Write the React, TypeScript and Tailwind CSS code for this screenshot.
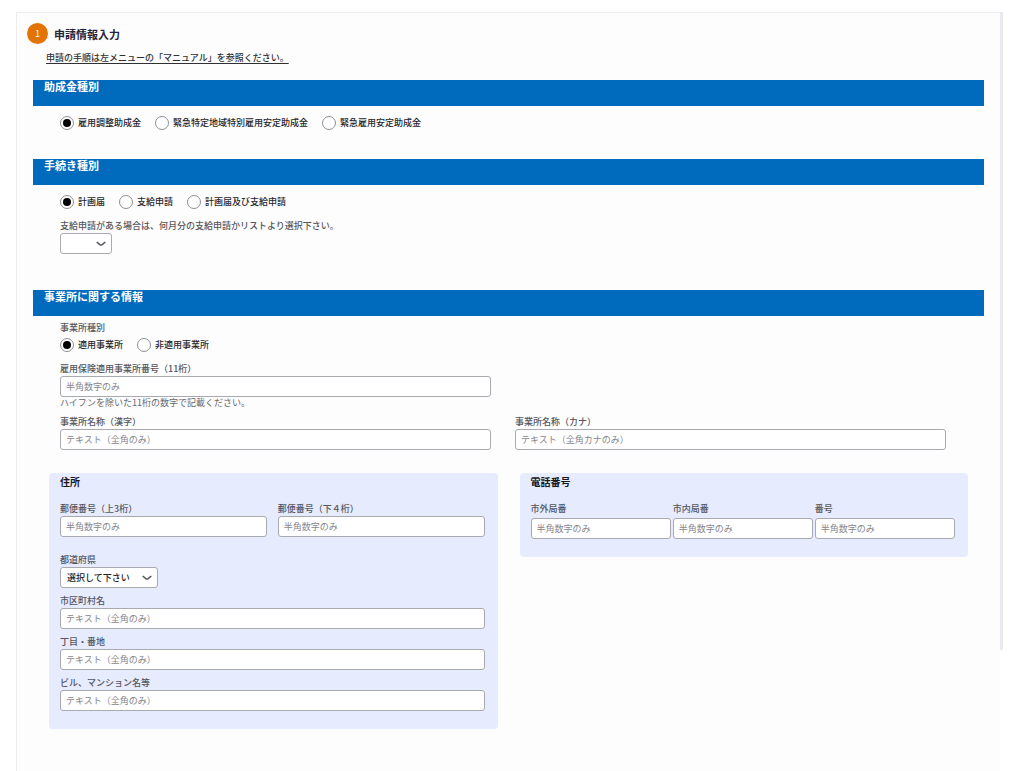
import type { ReactNode } from "react";

interface FieldProps {
  id: string;
  label: string;
  placeholder: string;
  hint?: string;
  labelClass?: string;
}

function Field({ id, label, placeholder, hint, labelClass = "" }: FieldProps) {
  return (
    <div className="min-w-0">
      <label htmlFor={id} className={`block leading-[14px] font-medium text-[#55555c] ${labelClass}`}>
        {label}
      </label>
      <input
        id={id}
        type="text"
        placeholder={placeholder}
        className="block h-[21px] w-full rounded-[3px] border border-[#a9a9b0] bg-white px-[5px] text-[#333] placeholder:text-[#85858c]"
      />
      {hint && <p className="leading-3 text-[#66666c]">{hint}</p>}
    </div>
  );
}

interface RadioGroupProps {
  name: string;
  legend: string;
  options: string[];
}

function RadioGroup({ name, legend, options }: RadioGroupProps) {
  return (
    <div role="radiogroup" aria-label={legend} className="flex flex-wrap gap-x-[14px]">
      {options.map((option, i) => (
        <label key={option} className="flex h-4 items-center gap-1 font-medium text-[#26262c]">
          <input
            type="radio"
            name={name}
            defaultChecked={i === 0}
            className="grid size-[14px] appearance-none place-content-center rounded-full border border-[#8f8f96] bg-white before:size-2 before:rounded-full before:content-[''] checked:before:bg-black"
          />
          {option}
        </label>
      ))}
    </div>
  );
}

interface SelectProps {
  id: string;
  label: string;
  options: string[];
  className: string;
  labelClass: string;
}

function Select({ id, label, options, className, labelClass }: SelectProps) {
  return (
    <div>
      <label htmlFor={id} className={`block font-medium text-[#55555c] ${labelClass}`}>
        {label}
      </label>
      <div className={`relative ${className}`}>
        <select
          id={id}
          className="block h-[21px] w-full appearance-none rounded-[3px] border border-[#a9a9b0] bg-white pl-[6px] font-medium text-[#222]"
        >
          {options.map((option) => (
            <option key={option}>{option}</option>
          ))}
        </select>
        <svg
          viewBox="0 0 10 6"
          className="pointer-events-none absolute top-2 right-[6px] h-[6px] w-[10px] fill-none stroke-[#55555c]"
          strokeWidth="1.5"
        >
          <path d="M0.7 1 L3.8 3.6 Q5 4.4 6.2 3.6 L9.3 1" />
        </svg>
      </div>
    </div>
  );
}

function SectionBar({ children }: { children: ReactNode }) {
  return (
    <h2 className="h-[26px] bg-[#006abc] px-[11px] text-[11px] leading-[13px] font-bold text-white">
      {children}
    </h2>
  );
}

function Panel({ title, children }: { title: string; children: ReactNode }) {
  return (
    <section className="rounded-[4px] bg-[#e6ebfe] pt-[2px] pr-[13px] pb-[18px] pl-[11px]">
      <h3 className="text-[10px] leading-[14px] font-bold text-[#17171c]">{title}</h3>
      {children}
    </section>
  );
}

export default function App() {
  return (
    <div className="flex min-h-screen bg-white pt-3 pr-[21px] pl-4 font-['Noto_Sans_CJK_JP','Noto_Sans',sans-serif] text-[9px]">
      <main className="min-w-0 flex-1 border-t border-l border-[#ececf1] bg-[#fdfdfe] px-4 pt-[10px]">
        {/* Step header */}
        <div className="-ml-[6px] flex items-center gap-[6px]">
          <span className="flex size-[21px] items-center justify-center rounded-full bg-[#e37302] text-white">
            1
          </span>
          <h1 className="text-[11px] leading-4 font-bold text-[#25253a]">申請情報入力</h1>
        </div>
        <p className="mt-[6px] mb-[14px] pl-[13px] leading-4 font-medium text-[#303034]">
          <a href="#manual" className="underline underline-offset-2 [text-decoration-skip-ink:none]">
            申請の手順は左メニューの「マニュアル」を参照ください。
          </a>
        </p>

        <form>
          <SectionBar>助成金種別</SectionBar>
          <div className="px-[27px] pt-[9px] pb-7">
            <RadioGroup
              name="subsidy"
              legend="助成金種別"
              options={["雇用調整助成金", "緊急特定地域特別雇用安定助成金", "緊急雇用安定助成金"]}
            />
          </div>

          <SectionBar>手続き種別</SectionBar>
          <div className="px-[27px] pt-[9px] pb-9">
            <RadioGroup
              name="procedure"
              legend="手続き種別"
              options={["計画届", "支給申請", "計画届及び支給申請"]}
            />
            <div className="mt-2">
              <Select
                id="month"
                label="支給申請がある場合は、何月分の支給申請かリストより選択下さい。"
                options={[""]}
                className="w-[52px]"
                labelClass="leading-[15px]"
              />
            </div>
          </div>

          <SectionBar>事業所に関する情報</SectionBar>
          <div className="pt-[5px] pr-[38px] pl-[27px]">
            <p className="mb-[2px] leading-[14px] font-medium text-[#55555c]">事業所種別</p>
            <RadioGroup name="office" legend="事業所種別" options={["適用事業所", "非適用事業所"]} />
            <div className="mt-[9px] grid grid-cols-2 gap-x-6 gap-y-[6px]">
              <Field
                id="office-number"
                label="雇用保険適用事業所番号（11桁）"
                placeholder="半角数字のみ"
                hint="ハイフンを除いた11桁の数字で記載ください。"
              />
              <div />
              <Field id="office-name" label="事業所名称（漢字）" placeholder="テキスト（全角のみ）" />
              <Field id="office-kana" label="事業所名称（カナ）" placeholder="テキスト（全角カナのみ）" />
            </div>
          </div>

          {/* Address and phone panels */}
          <div className="mt-[23px] grid grid-cols-2 items-start gap-[22px] pr-4 pl-4">
            <Panel title="住所">
              <div className="mt-[13px] grid grid-cols-2 gap-[11px]">
                <Field id="zip-first" label="郵便番号（上3桁）" placeholder="半角数字のみ" />
                <Field id="zip-last" label="郵便番号（下４桁）" placeholder="半角数字のみ" />
              </div>
              <div className="mt-4 grid gap-[6px]">
                <Select
                  id="prefecture"
                  label="都道府県"
                  options={["選択して下さい"]}
                  className="w-[98px]"
                  labelClass="leading-[14px]"
                />
                <Field id="city" label="市区町村名" placeholder="テキスト（全角のみ）" />
                <Field id="street" label="丁目・番地" placeholder="テキスト（全角のみ）" />
                <Field id="building" label="ビル、マンション名等" placeholder="テキスト（全角のみ）" />
              </div>
            </Panel>
            <Panel title="電話番号">
              <div className="mt-[13px] grid grid-cols-3 gap-[2px]">
                <Field id="tel-area" label="市外局番" placeholder="半角数字のみ" labelClass="mb-[2px]" />
                <Field id="tel-local" label="市内局番" placeholder="半角数字のみ" labelClass="mb-[2px]" />
                <Field id="tel-number" label="番号" placeholder="半角数字のみ" labelClass="mb-[2px]" />
              </div>
            </Panel>
          </div>
        </form>
      </main>
      {/* Scroll indicator */}
      <div className="h-[638px] w-[3px] bg-[#e9e9f1]" />
    </div>
  );
}
